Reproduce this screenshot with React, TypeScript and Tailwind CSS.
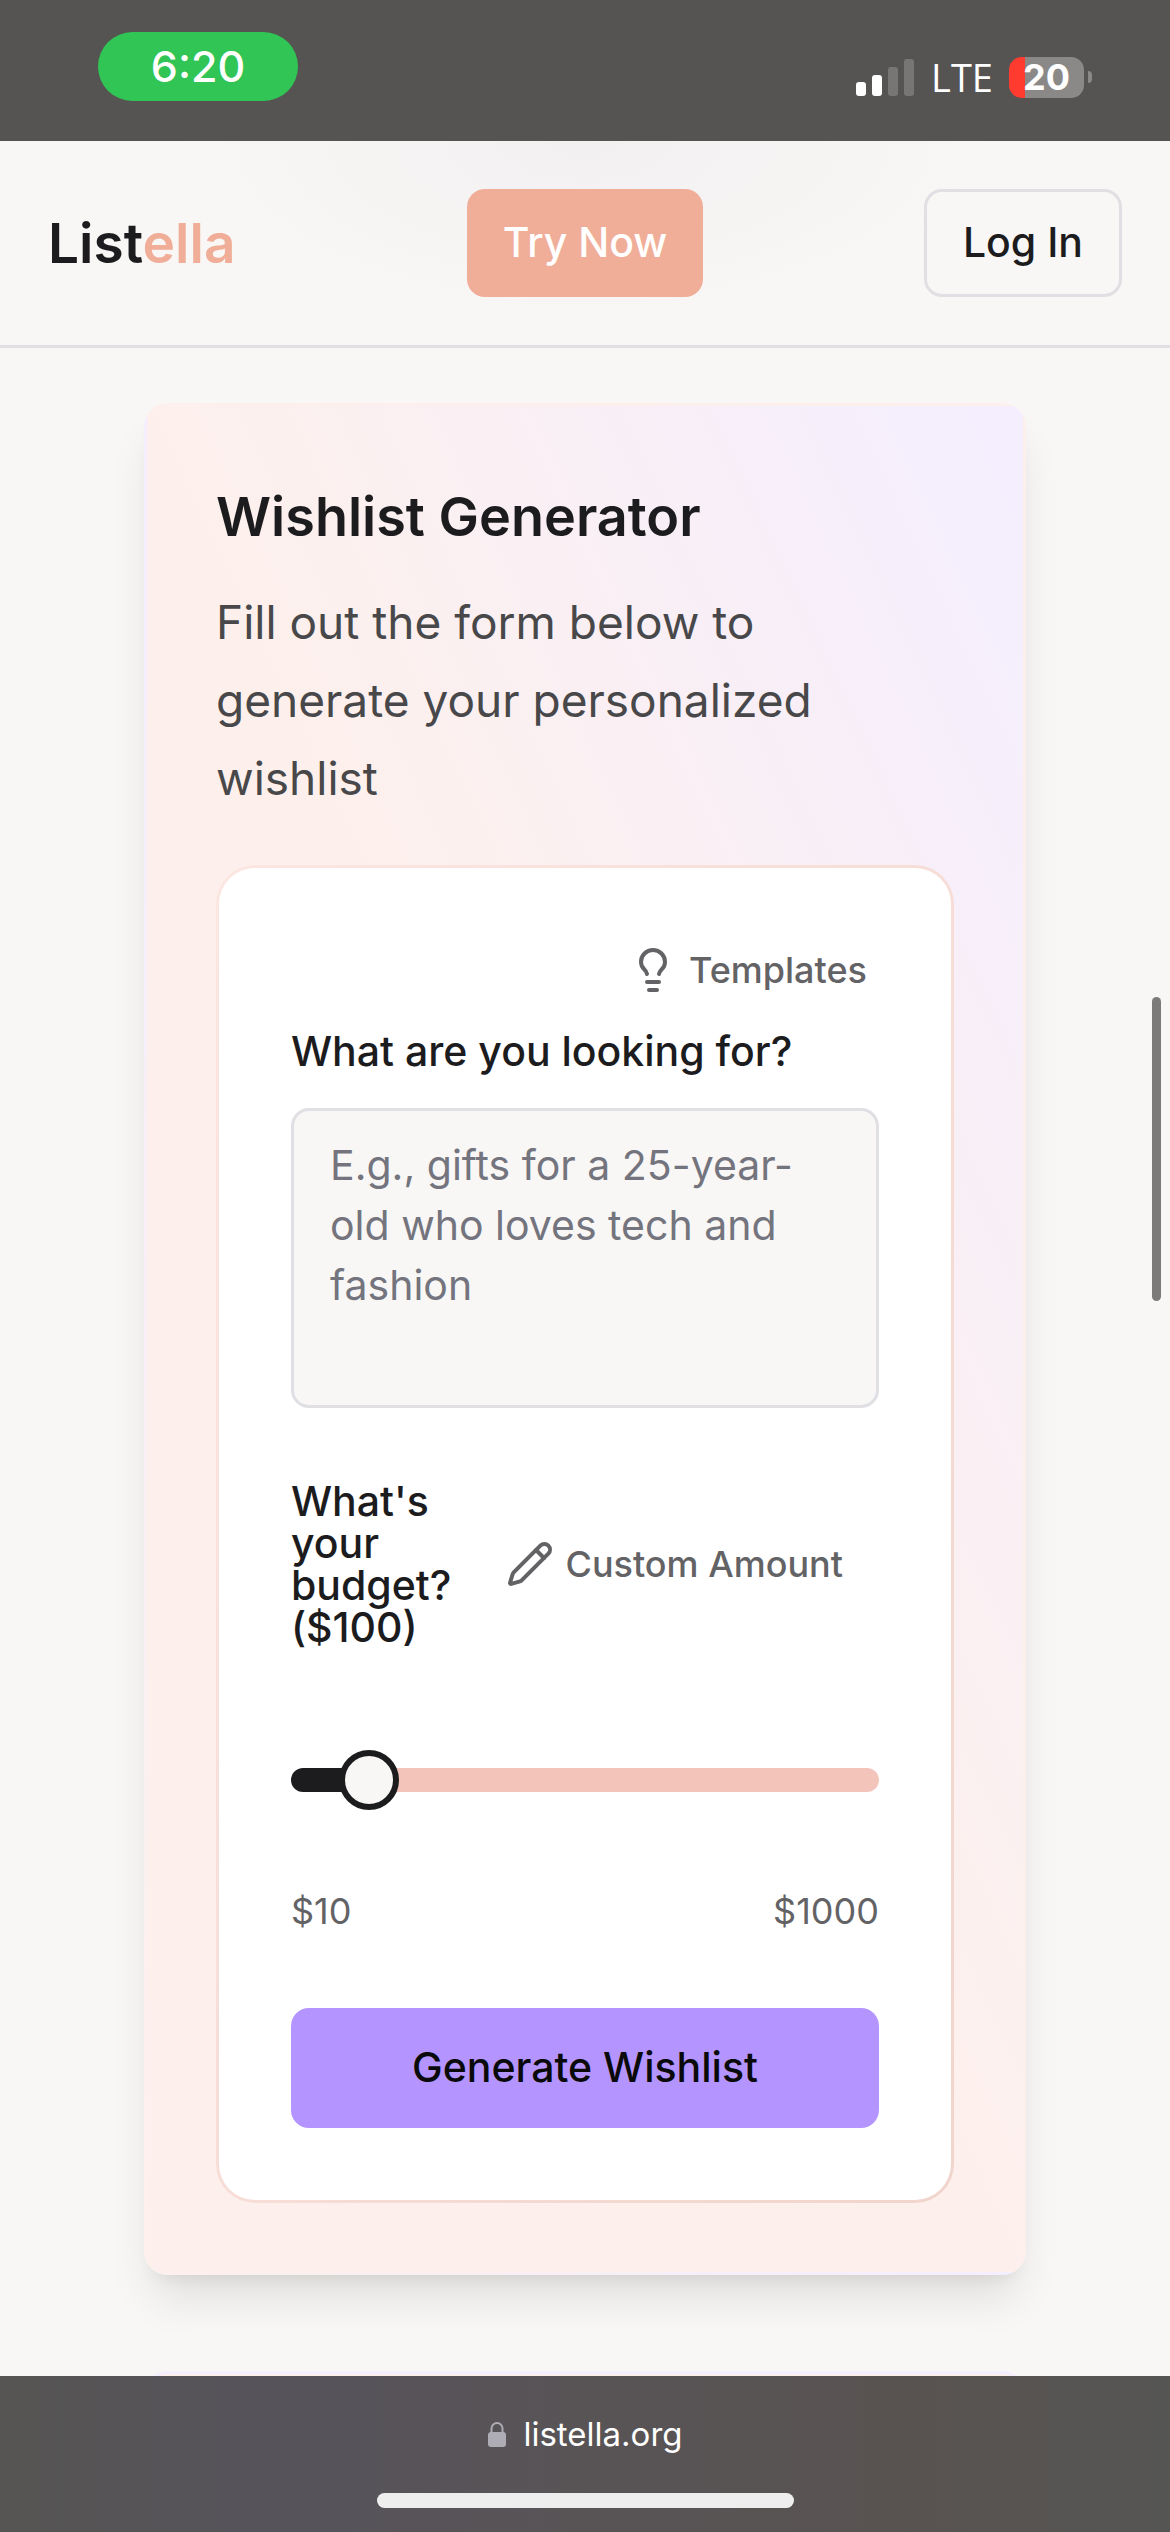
import { useState } from "react";
import { Lightbulb, Pencil } from "lucide-react";

const MIN = 10;
const MAX = 1000;

const StatusBar = () => (
  <div className="flex h-[141px] items-start justify-between bg-[#555453] pl-[98px] pr-[78px] text-white">
    <div className="mt-8 flex h-[69px] w-[200px] items-center justify-center rounded-full bg-[#30c554] text-[43px] font-medium">
      6:20
    </div>
    <div className="mt-14 flex h-[42px] items-center">
      <svg width="59" height="38" viewBox="0 0 59 38">
        <rect x="0" y="24" width="10" height="14" rx="3" fill="#fff" />
        <rect x="16" y="17" width="10" height="21" rx="3" fill="#fff" />
        <rect x="32" y="9" width="10" height="29" rx="3" fill="#777675" />
        <rect x="48" y="1" width="10" height="37" rx="3" fill="#777675" />
      </svg>
      <span className="ml-4 font-['Open_Sans',sans-serif] text-[38px] font-medium leading-[42px]">
        LTE
      </span>
      <div className="ml-4 flex h-[41px] w-[75px] items-center justify-center rounded-[13px] bg-[linear-gradient(to_right,#ff3b30_16px,#8a8988_16px)] text-[36px] font-bold leading-none">
        20
      </div>
      <div className="ml-1 h-3 w-1 rounded-r-full bg-[#8a8988]" />
    </div>
  </div>
);

const Header = () => (
  <header className="grid grid-cols-[1fr_auto_1fr] items-center border-b-3 border-[#e0dfe3] bg-[#f8f7f5] bg-[radial-gradient(ellipse_400px_180px_at_50%_0,#f2f0f1,#f8f7f5)] px-12 py-12">
    <a href="#" className="text-[55px] font-semibold leading-[60px] text-[#1c1c1e]">
      List<span className="text-[#f0ae99]">ella</span>
    </a>
    <button className="h-[108px] rounded-[18px] bg-[#f0ae99] px-9 text-[41px] font-medium text-white">
      Try Now
    </button>
    <button className="h-[108px] justify-self-end rounded-[18px] border-3 border-[#e0dfe3] bg-[#f8f7f5] px-9 text-[41px] font-medium text-[#1c1c1e]">
      Log In
    </button>
  </header>
);

const BudgetSlider = ({
  value,
  onChange,
}: {
  value: number;
  onChange: (value: number) => void;
}) => {
  const percent = ((value - MIN) / (MAX - MIN)) * 100;

  return (
    <input
      id="budget"
      type="range"
      min={MIN}
      max={MAX}
      value={value}
      onChange={(e) => onChange(Number(e.target.value))}
      className="block h-6 w-full appearance-none rounded-full [&::-webkit-slider-thumb]:size-[60px] [&::-webkit-slider-thumb]:appearance-none [&::-webkit-slider-thumb]:rounded-full [&::-webkit-slider-thumb]:border-6 [&::-webkit-slider-thumb]:border-solid [&::-webkit-slider-thumb]:border-[#1c1c1e] [&::-webkit-slider-thumb]:bg-[#f8f7f5]"
      style={{
        background: `linear-gradient(to right, #1c1c1e ${percent + 3}%, #f3c4ba ${percent + 3}%)`,
      }}
    />
  );
};

const WishlistForm = () => {
  const [budget, setBudget] = useState(100);

  return (
    <form
      className="rounded-[36px] bg-white p-[72px]"
      onSubmit={(e) => e.preventDefault()}
    >
      <div className="flex h-[60px] items-center justify-end pr-3">
        <button
          type="button"
          className="flex items-center gap-3 text-[36px] font-medium leading-[60px] text-[#636366]"
        >
          <Lightbulb size={48} strokeWidth={2} />
          Templates
        </button>
      </div>
      <label
        htmlFor="query"
        className="mt-[30px] block text-[41px] font-medium leading-[42px] text-[#1c1c1e]"
      >
        What are you looking for?
      </label>
      <textarea
        id="query"
        className="mt-9 block h-[300px] w-full resize-none rounded-[18px] border-3 border-[#e0dfe3] bg-[#f8f7f5] px-9 py-6 text-[41px] leading-[60px] placeholder:text-[#74747e]"
        placeholder="E.g., gifts for a 25-year-old who loves tech and fashion"
      />
      <div className="mt-[72px] flex items-center justify-between pr-9">
        <label
          htmlFor="budget"
          className="w-[180px] text-[41px] font-medium leading-[42px] text-[#1c1c1e]"
        >
          {`What's your budget? ($${budget})`}
        </label>
        <button
          type="button"
          className="flex items-center gap-3 text-[36px] font-medium text-[#636366]"
        >
          <Pencil size={48} strokeWidth={2} />
          Custom Amount
        </button>
      </div>
      <div className="mt-[120px]">
        <BudgetSlider value={budget} onChange={setBudget} />
      </div>
      <div className="mt-[95px] flex justify-between text-[36px] leading-[48px] text-[#636366]">
        <span>${MIN}</span>
        <span>${MAX}</span>
      </div>
      <button
        type="submit"
        className="mt-[73px] h-[120px] w-full rounded-[18px] bg-[#b494ff] text-[41px] font-medium text-[#0a0a0a]"
      >
        Generate Wishlist
      </button>
    </form>
  );
};

const BrowserBar = () => (
  <footer className="flex h-[156px] flex-col items-center bg-[linear-gradient(to_right,#565553,#56535b_24%,#585456_50%,#585351_78%,#555553)] text-white">
    <div className="mt-[34px] flex h-12 items-center gap-4">
      <svg width="20" height="26" viewBox="0 0 20 26">
        <path
          d="M4.5 12V7.5a5.5 5.5 0 0 1 11 0V12"
          fill="none"
          stroke="#aeacb5"
          strokeWidth="2"
        />
        <rect x="1" y="11" width="18" height="15" rx="3" fill="#aeacb5" />
      </svg>
      <span className="text-[33px] leading-[48px]">listella.org</span>
    </div>
    <div className="mt-[35px] h-[15px] w-[417px] rounded-full bg-[#eee]" />
  </footer>
);

const App = () => (
  <div className="relative flex min-h-screen flex-col bg-[#f8f7f5] font-[Inter,sans-serif]">
    <StatusBar />
    <Header />
    <main className="grow px-36 pt-[55px]">
      <section className="rounded-[24px] border-3 border-transparent bg-linear-to-tr from-[#fdf0ec] via-[#fdf0ec] to-[#f4eeff] pb-[69px] shadow-[0_30px_45px_-9px_rgba(0,0,0,0.1),0_12px_18px_-12px_rgba(0,0,0,0.1)]">
        <div className="px-[69px] pt-[72px]">
          <h1 className="text-[54px] font-semibold leading-[78px] text-[#1c1c1e]">
            Wishlist Generator
          </h1>
          <p className="mt-[27px] text-[46px] leading-[78px] text-[#48484a]">
            Fill out the form below to generate your personalized wishlist
          </p>
        </div>
        <div className="mx-[69px] mt-12 rounded-[39px] bg-linear-to-br from-[#fce6e2] to-[#f1d5cc] p-[3px]">
          <WishlistForm />
        </div>
      </section>
      {/* top edge of the next card, cut off by the browser bar */}
      <div className="mt-24 h-[5px] overflow-hidden">
        <div className="h-24 rounded-[24px] border-t-3 border-[#f4eeff] bg-[#fdf0ec]" />
      </div>
    </main>
    <BrowserBar />
    <div className="absolute right-[9px] top-[997px] h-[304px] w-[9px] rounded-full bg-[#7c7b7a]" />
  </div>
);

export default App;
